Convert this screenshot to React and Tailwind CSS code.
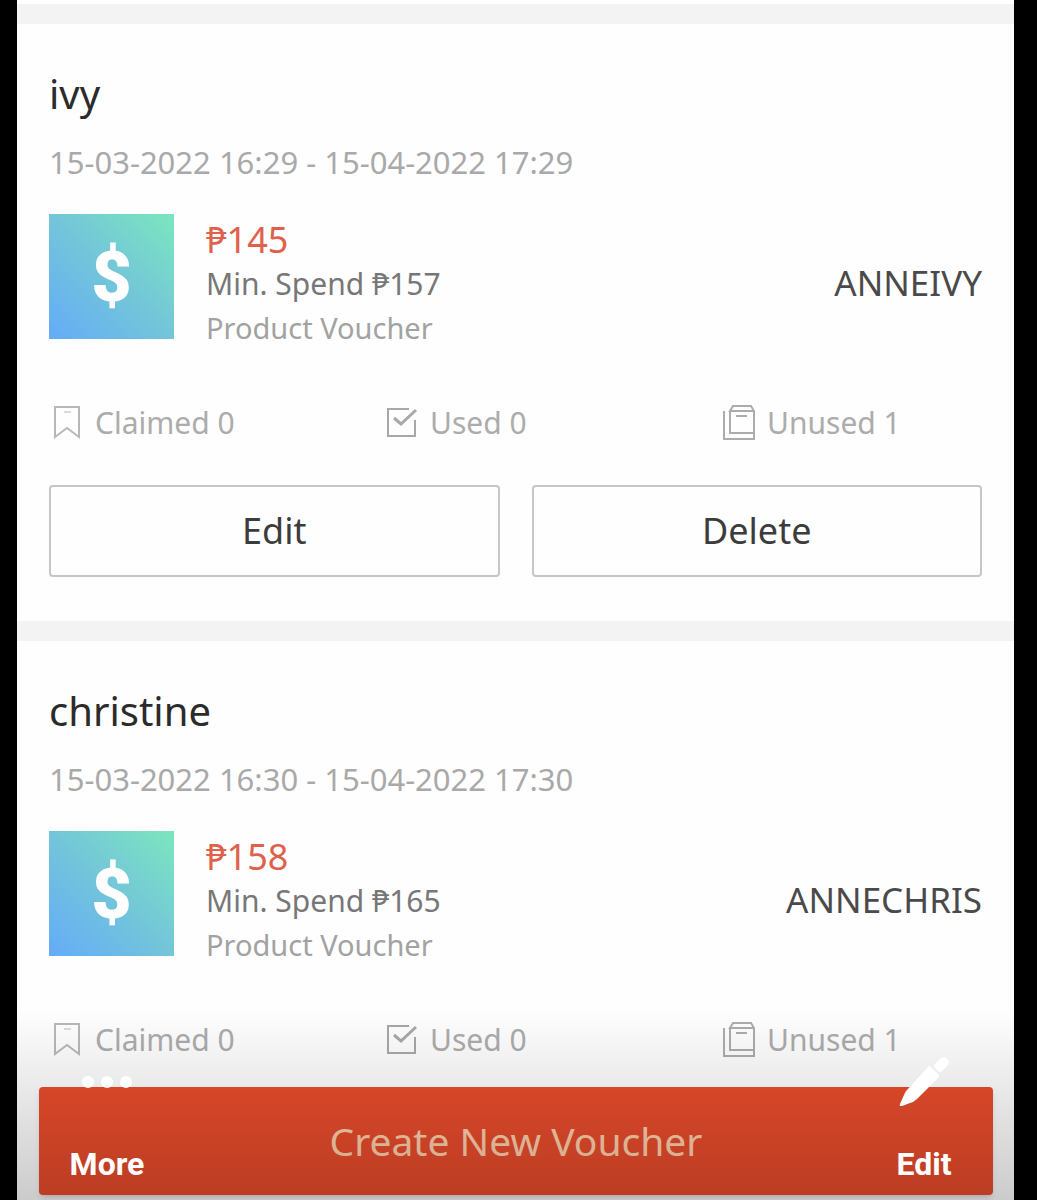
const vouchers = [
  {
    id: 1,
    name: 'ivy',
    period: '15-03-2022 16:29 - 15-04-2022 17:29',
    amount: '₱145',
    minSpend: '₱157',
    code: 'ANNEIVY',
    editable: true
  },
  {
    id: 2,
    name: 'christine',
    period: '15-03-2022 16:30 - 15-04-2022 17:30',
    amount: '₱158',
    minSpend: '₱165',
    code: 'ANNECHRIS',
    editable: false
  }
];

function BookmarkIcon() {
  return (
    <svg viewBox="0 0 36 36" className="w-9 h-9" fill="none" stroke="#b8b8b8" strokeWidth="2">
      <path d="M6 2h24v30l-12-9-12 9z" />
      <path d="M15 7h7" strokeWidth="1" />
    </svg>
  );
}

function CheckIcon() {
  return (
    <svg viewBox="0 0 36 36" className="w-9 h-9" fill="none" stroke="#a8a8a8" strokeWidth="2">
      <path d="M25 4H4v27h27V15" />
      <path d="M10 13l7 6L32 5" strokeWidth="3" />
    </svg>
  );
}

function StackIcon() {
  return (
    <svg viewBox="0 0 36 36" className="w-9 h-9" fill="none" stroke="#acacac" strokeWidth="2">
      <path d="M9 6v22h24V6l-3-5H12L9 6h24" />
      <path d="M3 6v28h30v-6" />
      <path d="M15 11h11" />
    </svg>
  );
}

function Stat({ icon, label, value }) {
  return (
    <div className="flex items-center gap-2.5">
      {icon}
      <span>
        {label} {value}
      </span>
    </div>
  );
}

function VoucherCard({ voucher }) {
  const { name, period, amount, minSpend, code, editable } = voucher;

  return (
    <article className={`px-8 pt-[44px] bg-[#fefefe] ${editable ? 'pb-[44px]' : 'pb-[25px]'}`}>
      <h2 className="text-[40px] leading-[52px] text-[#2b2b2b]">{name}</h2>
      <p className="mt-[21px] text-[31px] leading-[42px] text-[#a9a9a9]">{period}</p>

      <div className="mt-[31px] flex items-start gap-8">
        <div className="w-[125px] h-[125px] shrink-0 flex items-center justify-center bg-linear-to-tr from-[#65abf8] via-[#73c5d9] to-[#7ce6bd] text-white text-[70px] leading-none font-black font-[Roboto,sans-serif]">
          $
        </div>
        <div className="flex-1 pt-1 leading-[44px]">
          <p className="text-[36px] text-[#e0614b]">{amount}</p>
          <p className="text-[30px] text-[#777777]">Min. Spend {minSpend}</p>
          <p className="text-[29px] leading-[43px] text-[#a2a2a2]">Product Voucher</p>
        </div>
        <p className="self-center pt-1 text-[35px] text-[#4a4a4a]">{code}</p>
      </div>

      <div className="mt-[52px] grid grid-cols-[335fr_337fr_261fr] text-[30px] leading-[44px] text-[#acacac]">
        <Stat icon={<BookmarkIcon />} label="Claimed" value={0} />
        <Stat icon={<CheckIcon />} label="Used" value={0} />
        <Stat icon={<StackIcon />} label="Unused" value={1} />
      </div>

      {editable && (
        <div className="mt-[40px] grid grid-cols-2 gap-8 text-[36px] text-[#3c3c3c]">
          <button type="button" className="h-[92px] border-2 border-[#c6c6c6] rounded-sm">
            Edit
          </button>
          <button type="button" className="h-[92px] border-2 border-[#c6c6c6] rounded-sm">
            Delete
          </button>
        </div>
      )}
    </article>
  );
}

export default function App() {
  return (
    <div className="min-h-screen bg-black pl-[17px] pr-[23px] font-['Noto_Sans',sans-serif]">
      <div className="relative min-h-screen flex flex-col bg-[#fefefe]">
        <main className="flex-1 mt-1 flex flex-col">
          {vouchers.map((voucher) => (
            <section key={voucher.id} className="border-t-20 border-[#f3f3f3]">
              <VoucherCard voucher={voucher} />
            </section>
          ))}
        </main>

        <footer className="pl-[22px] pr-[21px] pb-[5px]">
          <button
            type="button"
            className="w-full h-[108px] rounded-sm bg-[#e94c2c] text-[39px] text-[#ffd0ac] shadow-md"
          >
            Create New Voucher
          </button>
        </footer>

        <div className="absolute inset-x-0 bottom-0 h-[190px] px-10 pb-4 flex items-end justify-between bg-linear-to-b from-transparent to-black/20 font-[Roboto,sans-serif] text-[32px] leading-[40px] font-bold text-white">
          <button type="button" className="w-[100px] flex flex-col items-center gap-14">
            <svg viewBox="0 0 50 12" className="w-[50px] h-3" fill="currentColor">
              <circle cx="6" cy="6" r="6" />
              <circle cx="25" cy="6" r="6" />
              <circle cx="44" cy="6" r="6" />
            </svg>
            More
          </button>
          <button type="button" className="w-[100px] flex flex-col items-center gap-[38px]">
            <svg viewBox="0 0 50 50" className="w-[50px] h-[50px]" fill="currentColor">
              <path d="M32 11l7 7q2 2 0 4L18 43q-3 3-7 4l-8 3q-3 1-2-2l4-9q1-3 3-5l21-23q2-2 3 0z" />
              <path d="M36 8l5-5q4-4 7 0 4 3 0 7l-5 5q-2 2-4 0l-3-3q-2-2 0-4z" />
            </svg>
            Edit
          </button>
        </div>
      </div>
    </div>
  );
}
